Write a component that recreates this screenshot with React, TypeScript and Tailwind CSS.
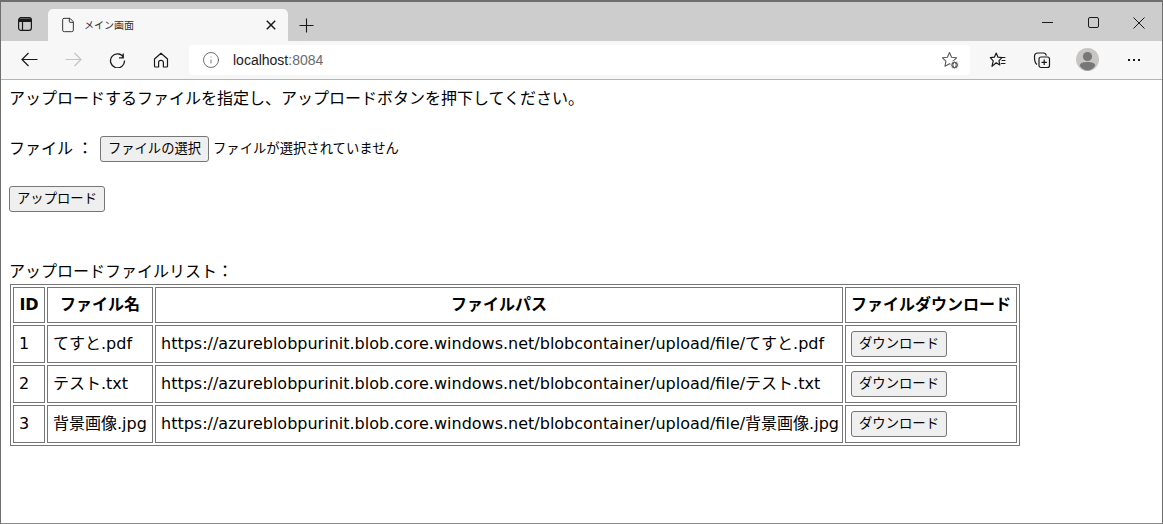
import React from 'react';
import { File, Info } from 'lucide-react';

interface FileRow {
  id: number;
  name: string;
}

const FILES: FileRow[] = [
  { id: 1, name: 'てすと.pdf' },
  { id: 2, name: 'テスト.txt' },
  { id: 3, name: '背景画像.jpg' },
];

const BASE_URL = 'https://azureblobpurinit.blob.core.windows.net/blobcontainer/upload/file/';

const UI_FONT = "font-['Liberation_Sans','Noto_Sans_CJK_JP',sans-serif]";
const PAGE_FONT = "font-['DejaVu_Sans','Noto_Sans_CJK_JP',sans-serif]";
const BTN =
  "h-[26px] rounded-[3px] border border-[#767676] bg-[#efefef] px-[6px] pb-[2px] text-[13.33px] leading-none text-black whitespace-nowrap font-['Noto_Sans_CJK_JP',sans-serif]";
const TH = 'border border-[#767676] p-[5px] h-[35px] text-base font-bold text-center whitespace-nowrap';
const TD = 'border border-[#767676] p-[5px] h-[37px] text-base text-left whitespace-nowrap';

const Glyph = ({ size, children, sw = 1.2 }: { size: number; children: React.ReactNode; sw?: number }) => (
  <svg width={size} height={size} viewBox={`0 0 ${size} ${size}`} fill="none" stroke="currentColor" strokeWidth={sw}>
    {children}
  </svg>
);

const TabsIcon = () => (
  <svg width="16" height="16" viewBox="0 0 16 16" fill="none" stroke="#1a1a1a" strokeWidth="1.2">
    <rect x="1.6" y="1.6" width="12.8" height="12.8" rx="2.4" />
    <path d="M5.5 5.5V14.4M2 5.5H14" />
    <path d="M2 2.5H14V5.2H2Z" fill="#1a1a1a" stroke="none" />
  </svg>
);

const StarPlus = () => (
  <svg width="20" height="20" viewBox="0 0 20 20" fill="none">
    <path d="M9.5 2.6 11.6 7.2 16.6 7.8 13 11.2 13.9 16.2 9.5 13.7 5 16.2 5.9 11.2 2.4 7.8 7.4 7.2Z" stroke="#5a5a5a" strokeWidth="1.1" strokeLinejoin="round" />
    <circle cx="14.6" cy="15" r="3.9" fill="#5f5f5f" stroke="#f7f7f7" />
    <path d="M14.6 13v4M12.6 15h4" stroke="#fff" strokeWidth="1.1" />
  </svg>
);

const StarList = () => (
  <svg width="18" height="18" viewBox="0 0 18 18" fill="none" stroke="#1a1a1a" strokeWidth="1.2">
    <path d="M7.2 2 9 6.2 13 6.6 10 9.6 10.8 14 7.2 11.8 3 15.4 4.2 9.8 1.3 6.7 5.4 6.2Z" strokeLinejoin="round" />
    <path d="M12.4 6.5h4M12.6 9.5h3.8M11.8 12.5h4.6" />
  </svg>
);

const Collections = () => (
  <svg width="18" height="18" viewBox="0 0 18 18" fill="none" stroke="#1a1a1a" strokeWidth="1.2">
    <path d="M4 13.5C2.5 12.5 1.4 9 1.5 5.5 1.5 3.5 3 2 5 2H10.5C12 2 13 3 13.4 4.6" />
    <rect x="6" y="6" width="10.5" height="10.5" rx="2" fill="#f7f7f7" />
    <path d="M11.2 8.6v5.4M8.5 11.3h5.4" />
  </svg>
);

const Avatar = () => (
  <svg width="23" height="23" viewBox="0 0 23 23">
    <circle cx="11.5" cy="11.5" r="11.5" fill="#c8c6c4" />
    <circle cx="11.5" cy="8.5" r="4.6" fill="#797775" />
    <path d="M3.6 17.5C4.6 14.6 7.5 14 11.5 14S18.4 14.6 19.4 17.5C17.5 21 14 22.5 11.5 22.5S5.5 21 3.6 17.5Z" fill="#797775" />
  </svg>
);

export default function App() {
  return (
    <div className={`${UI_FONT} h-[524px] w-[1163px] overflow-hidden border border-t-2 border-[#6e6e6e] border-b-[#8a8a8a] bg-white text-black flex flex-col`}>
      {/* tab strip */}
      <div className="h-[39px] shrink-0 bg-[#cdcdcd] flex items-end">
        <div className="w-[47px] h-[31px] flex items-start justify-center pt-[6px] pl-[1px]">
          <TabsIcon />
        </div>
        <div className="h-[32px] w-[240px] bg-[#f7f7f7] rounded-t-[5px] flex items-center pl-[12px] pr-[12px] text-[#1a1a1a]">
          <File size={16} strokeWidth={1.3} />
          <span className="ml-[8px] mb-[2px] text-[10px] text-[#333] flex-1 font-['Noto_Sans_CJK_JP',sans-serif]">メイン画面</span>
          <Glyph size={10} sw={1.5}>
            <path d="M0.8 0.8 9.2 9.2M9.2 0.8 0.8 9.2" />
          </Glyph>
        </div>
        <div className="h-[32px] w-[36px] flex items-center justify-center pl-[1px] text-[#1a1a1a]">
          <Glyph size={15} sw={1.1}>
            <path d="M7.5 0.5V14.5M0.5 7.5H14.5" />
          </Glyph>
        </div>
        <div className="flex-1" />
        <div className="h-[38px] flex items-start text-[#1a1a1a]">
          <div className="w-[46px] h-[38px] flex items-start justify-center pt-[14px]">
            <Glyph size={11} sw={1}>
              <path d="M0 5.5H11" />
            </Glyph>
          </div>
          <div className="w-[46px] h-[38px] flex items-start justify-center pt-[14px]">
            <Glyph size={11} sw={1}>
              <rect x="0.5" y="0.5" width="10" height="10" rx="1.5" />
            </Glyph>
          </div>
          <div className="w-[46px] h-[38px] flex items-start justify-center pt-[14px]">
            <Glyph size={12} sw={1}>
              <path d="M0.5 0.5 11.5 11.5M11.5 0.5 0.5 11.5" />
            </Glyph>
          </div>
        </div>
      </div>

      {/* toolbar */}
      <div className="h-[39px] shrink-0 bg-[#f7f7f7] border-b border-[#b4b4b4] flex items-center pb-[1px] text-[#1a1a1a]">
        <div className="w-[44px] ml-[6px] flex justify-center">
          <Glyph size={17} sw={1.2}>
            <path d="M16.5 8.5H1M7.5 2 1 8.5 7.5 15" />
          </Glyph>
        </div>
        <div className="w-[44px] flex justify-center text-[#c4c4c4]">
          <Glyph size={17} sw={1.2}>
            <path d="M0.5 8.5H16M9.5 2 16 8.5 9.5 15" />
          </Glyph>
        </div>
        <div className="w-[44px] flex justify-center">
          <Glyph size={17} sw={1.3}>
            <path d="M14.2 2.6V6.8H10M14.6 6.4A7 7 0 1 0 15.5 9.5" />
          </Glyph>
        </div>
        <div className="w-[44px] flex justify-center">
          <Glyph size={16} sw={1.2}>
            <path d="M1.5 7 8 1.2 14.5 7V14.2C14.5 14.7 14.2 15 13.7 15H10.4V10.4C10.4 9.4 9.4 8.4 8 8.4S5.6 9.4 5.6 10.4V15H2.3C1.8 15 1.5 14.7 1.5 14.2Z" strokeLinejoin="round" />
          </Glyph>
        </div>
        <div className="ml-[6px] w-[781px] h-[30px] rounded-[4px] bg-white flex items-center pl-[13px] pr-[10px]">
          <Info size={18} strokeWidth={1} className="text-[#444]" />
          <span className="ml-[13px] pt-[1px] text-[14px] text-[#1a1a1a]">localhost<span className="text-[#6b6b6b]">:8084</span></span>
          <span className="flex-1" />
          <StarPlus />
        </div>
        <div className="w-[55px] flex justify-center"><StarList /></div>
        <div className="w-[33px] flex justify-center"><Collections /></div>
        <div className="w-[59px] flex justify-center"><Avatar /></div>
        <div className="w-[34px] flex justify-center">
          <Glyph size={14} sw={2}>
            <path d="M1 7H3M6 7H8M11 7H13" />
          </Glyph>
        </div>
      </div>

      {/* page */}
      <div className={`${PAGE_FONT} flex-1 pl-[8px] text-base leading-[20px]`}>
        <p className="mt-[9px] h-[20px]">アップロードするファイルを指定し、アップロードボタンを押下してください。</p>
        <div className="mt-[27px] h-[26px] flex items-center">
          <span>ファイル</span>
          <span className="ml-[4px]">：</span>
          <button className={`${BTN} ml-[7px] w-[109px]`}>ファイルの選択</button>
          <span className="ml-[4px] text-[13.33px]">ファイルが選択されていません</span>
        </div>
        <div className="mt-[24px] h-[26px] flex">
          <button className={`${BTN} w-[96px]`}>アップロード</button>
        </div>
        <p className="mt-[50px] h-[20px]">アップロードファイルリスト：</p>
        <table className="mt-[2px] ml-[1px] border-separate border-spacing-[2px] border border-[#767676] w-[1010px] table-fixed">
          <colgroup>
            <col className="w-[32px]" />
            <col className="w-[106px]" />
            <col className="w-[688px]" />
            <col className="w-[172px]" />
          </colgroup>
          <thead>
            <tr>
              <th className={TH}>ID</th>
              <th className={TH}>ファイル名</th>
              <th className={TH}>ファイルパス</th>
              <th className={TH}>ファイルダウンロード</th>
            </tr>
          </thead>
          <tbody>
            {FILES.map((f) => (
              <tr key={f.id}>
                <td className={TD}>{f.id}</td>
                <td className={TD}>{f.name}</td>
                <td className={TD}>{BASE_URL + f.name}</td>
                <td className={TD}>
                  <button className={`${BTN} block w-[96px]`}>ダウンロード</button>
                </td>
              </tr>
            ))}
          </tbody>
        </table>
      </div>
    </div>
  );
}
